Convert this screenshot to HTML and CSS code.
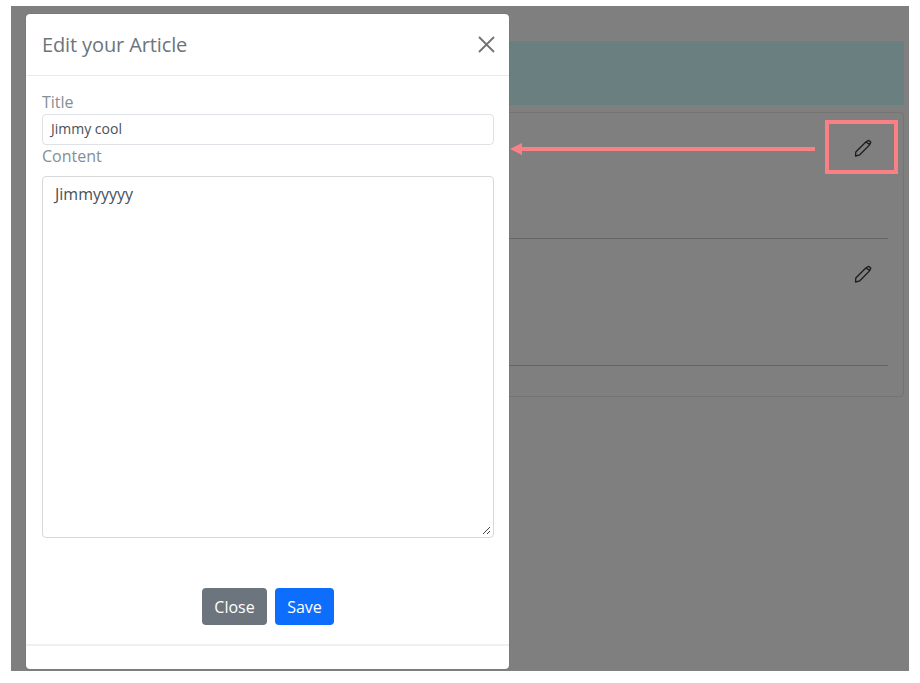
FILE: index.html
```html
<!DOCTYPE html>
<html lang="en">
<head>
<meta charset="utf-8">
<title>Edit your Article</title>
<link rel="stylesheet" href="styles.css">
</head>
<body>
<div class="stage">
  <div class="alert"></div>
  <div class="card">
    <div class="row">
      <svg class="pencil" viewBox="0 0 18 18" width="18" height="18"><path d="M1.5 17 L1.8 13 L11.8 3 L14.6 1.4 L16.8 3 L15.8 5.6 L5.8 15.8 Z M12 3 L15.8 5.6" /></svg>
    </div>
    <div class="row">
      <svg class="pencil" viewBox="0 0 18 18" width="18" height="18"><path d="M1.5 17 L1.8 13 L11.8 3 L14.6 1.4 L16.8 3 L15.8 5.6 L5.8 15.8 Z M12 3 L15.8 5.6" /></svg>
    </div>
  </div>
  <div class="highlight"></div>
  <div class="arrow"><span class="arrow-head"></span><span class="arrow-line"></span></div>
  <div class="modal">
    <header class="modal-header">
      <h2 class="modal-title">Edit your Article</h2>
      <svg class="close" viewBox="0 0 17 17" width="17" height="17"><path d="M1 1 L16 16 M16 1 L1 16" /></svg>
    </header>
    <div class="modal-body">
      <label class="label">Title</label>
      <div class="input">Jimmy cool</div>
      <label class="label">Content</label>
      <div class="textarea">Jimmyyyyy
        <svg class="grip" viewBox="0 0 9 9" width="9" height="9"><path d="M1 8 L8 1 M5 8 L8 5" /></svg>
      </div>
      <div class="actions">
        <button class="btn btn-gray">Close</button>
        <button class="btn btn-blue">Save</button>
      </div>
    </div>
    <div class="modal-footer"></div>
  </div>
</div>
</body>
</html>
```
FILE: styles.css
```css
* { box-sizing: border-box; }
html, body { margin: 0; background: #fff; }
body { width: 920px; height: 683px; overflow: hidden; font-family: "Open Sans", "Noto Sans", sans-serif; }
.stage {
  position: relative;
  margin: 6px 0 0 11px;
  width: 898px;
  height: 665px;
  padding: 35px 5px 0 100px;
  background: #7f7f7f;
}
.alert { height: 64px; background: #6a7f80; }
.card {
  margin-top: 7px;
  height: 285px;
  border: 1px solid #747474;
  border-radius: 4px;
  padding: 0 15px 0 0;
}
.row {
  height: 126px;
  border-bottom: 1px solid #666;
  display: flex;
  justify-content: flex-end;
  padding: 26px 16px 0 0;
}
.row + .row { height: 127px; }
.pencil { fill: none; stroke: #1d1d1d; stroke-width: 1.3; stroke-linejoin: round; }
.highlight {
  position: absolute;
  left: 814px;
  top: 114px;
  width: 73px;
  height: 54px;
  border: 4px solid #f98084;
}
.arrow {
  position: absolute;
  left: 499px;
  top: 137px;
  width: 305px;
  height: 12px;
  display: flex;
  align-items: center;
}
.arrow-head {
  width: 0;
  height: 0;
  border-top: 6px solid transparent;
  border-bottom: 6px solid transparent;
  border-right: 12px solid #f98084;
}
.arrow-line { flex: 1; height: 4px; background: #f98084; }
.modal {
  position: absolute;
  left: 15px;
  top: 8px;
  width: 483px;
  height: 655px;
  background: #fff;
  border-radius: 4px;
  display: flex;
  flex-direction: column;
  box-shadow: 0 0 1px #555;
}
.modal-header {
  height: 62px;
  flex: none;
  border-bottom: 1px solid #e9ecef;
  display: flex;
  align-items: center;
  justify-content: space-between;
  padding: 0 14px 0 16px;
}
.modal-title { margin: 0; font-size: 20px; font-weight: 400; letter-spacing: -0.12px; color: #6c757d; }
.close { fill: none; stroke: #727272; stroke-width: 1.8; }
.modal-body { flex: 1; padding: 15px 15px 0 16px; display: flex; flex-direction: column; }
.label { display: block; height: 22px; font-size: 16px; line-height: 22px; color: #868e96; }
.input {
  height: 31px;
  margin-top: 1px;
  padding: 0 8px;
  border: 1px solid #dee2e6;
  border-radius: 4px;
  font-size: 14px;
  line-height: 28px;
  color: #495057;
}
.textarea {
  position: relative;
  height: 362px;
  margin-top: 9px;
  padding: 7px 12px;
  border: 1px solid #d6d9dc;
  border-radius: 4px;
  font-size: 16px;
  line-height: 20px;
  color: #495057;
}
.grip {
  position: absolute;
  right: 2px;
  bottom: 2px;
  fill: none;
  stroke: #444;
  stroke-width: 1;
}
.actions { display: flex; justify-content: flex-start; gap: 8px; margin-top: 50px; padding-left: 160px; }
.btn {
  height: 37px;
  border: 0;
  border-radius: 4px;
  padding: 0 12px;
  font-family: inherit;
  font-size: 16px;
  color: #fff;
}
.btn-gray { background: #6c757d; width: 65px; }
.btn-blue { background: #0d6efd; width: 59px; }
.modal-footer { height: 25px; flex: none; border-top: 2px solid #f0f0f0; }
```
